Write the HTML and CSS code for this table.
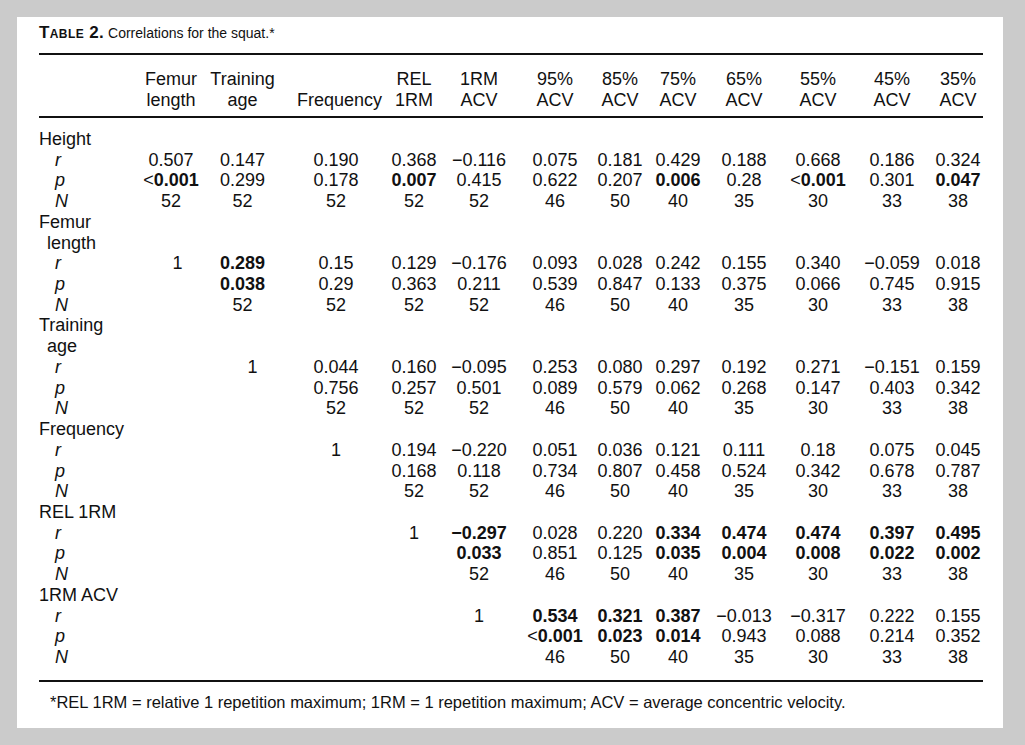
FILE: index.html
```html
<!DOCTYPE html>
<html>
<head>
<meta charset="utf-8">
<link rel="stylesheet" href="styles.css">
</head>
<body>
<div class="panel">
  <div class="title"><b class="tlabel">Table 2.</b> Correlations for the squat.*</div>
  <table class="corr">
    <colgroup>
      <col style="width:96px"><col style="width:72px"><col style="width:82px"><col style="width:86px"><col style="width:72px"><col style="width:70px"><col style="width:70px"><col style="width:62px"><col style="width:62px"><col style="width:70px"><col style="width:74px"><col style="width:78px"><col style="width:50px">
    </colgroup>
    <thead>
      <tr>
        <th class="lab"></th>
        <th>Femur<br>length</th>
        <th>Training<br>age</th>
        <th>Frequency</th>
        <th>REL<br>1RM</th>
        <th>1RM<br>ACV</th>
        <th>95%<br>ACV</th>
        <th>85%<br>ACV</th>
        <th>75%<br>ACV</th>
        <th>65%<br>ACV</th>
        <th>55%<br>ACV</th>
        <th>45%<br>ACV</th>
        <th>35%<br>ACV</th>
      </tr>
    </thead>
    <tbody>
      <tr class="first"><td class="grp" colspan="13">Height</td></tr>
      <tr><td class="st">r</td><td>0.507</td><td>0.147</td><td>0.190</td><td>0.368</td><td>&minus;0.116</td><td>0.075</td><td>0.181</td><td>0.429</td><td>0.188</td><td>0.668</td><td>0.186</td><td>0.324</td></tr>
      <tr><td class="st">p</td><td>&lt;<b>0.001</b></td><td>0.299</td><td>0.178</td><td><b>0.007</b></td><td>0.415</td><td>0.622</td><td>0.207</td><td><b>0.006</b></td><td>0.28</td><td>&lt;<b>0.001</b></td><td>0.301</td><td><b>0.047</b></td></tr>
      <tr><td class="st">N</td><td>52</td><td>52</td><td>52</td><td>52</td><td>52</td><td>46</td><td>50</td><td>40</td><td>35</td><td>30</td><td>33</td><td>38</td></tr>

      <tr><td class="grp" colspan="13">Femur<br>length</td></tr>
      <tr><td class="st">r</td><td class="one-1">1</td><td><b>0.289</b></td><td>0.15</td><td>0.129</td><td>&minus;0.176</td><td>0.093</td><td>0.028</td><td>0.242</td><td>0.155</td><td>0.340</td><td>&minus;0.059</td><td>0.018</td></tr>
      <tr><td class="st">p</td><td></td><td><b>0.038</b></td><td>0.29</td><td>0.363</td><td>0.211</td><td>0.539</td><td>0.847</td><td>0.133</td><td>0.375</td><td>0.066</td><td>0.745</td><td>0.915</td></tr>
      <tr><td class="st">N</td><td></td><td>52</td><td>52</td><td>52</td><td>52</td><td>46</td><td>50</td><td>40</td><td>35</td><td>30</td><td>33</td><td>38</td></tr>

      <tr><td class="grp" colspan="13">Training<br>age</td></tr>
      <tr><td class="st">r</td><td></td><td class="one-2">1</td><td>0.044</td><td>0.160</td><td>&minus;0.095</td><td>0.253</td><td>0.080</td><td>0.297</td><td>0.192</td><td>0.271</td><td>&minus;0.151</td><td>0.159</td></tr>
      <tr><td class="st">p</td><td></td><td></td><td>0.756</td><td>0.257</td><td>0.501</td><td>0.089</td><td>0.579</td><td>0.062</td><td>0.268</td><td>0.147</td><td>0.403</td><td>0.342</td></tr>
      <tr><td class="st">N</td><td></td><td></td><td>52</td><td>52</td><td>52</td><td>46</td><td>50</td><td>40</td><td>35</td><td>30</td><td>33</td><td>38</td></tr>

      <tr><td class="grp" colspan="13">Frequency</td></tr>
      <tr><td class="st">r</td><td></td><td></td><td>1</td><td>0.194</td><td>&minus;0.220</td><td>0.051</td><td>0.036</td><td>0.121</td><td>0.111</td><td>0.18</td><td>0.075</td><td>0.045</td></tr>
      <tr><td class="st">p</td><td></td><td></td><td></td><td>0.168</td><td>0.118</td><td>0.734</td><td>0.807</td><td>0.458</td><td>0.524</td><td>0.342</td><td>0.678</td><td>0.787</td></tr>
      <tr><td class="st">N</td><td></td><td></td><td></td><td>52</td><td>52</td><td>46</td><td>50</td><td>40</td><td>35</td><td>30</td><td>33</td><td>38</td></tr>

      <tr><td class="grp" colspan="13">REL 1RM</td></tr>
      <tr><td class="st">r</td><td></td><td></td><td></td><td>1</td><td><b>&minus;0.297</b></td><td>0.028</td><td>0.220</td><td><b>0.334</b></td><td><b>0.474</b></td><td><b>0.474</b></td><td><b>0.397</b></td><td><b>0.495</b></td></tr>
      <tr><td class="st">p</td><td></td><td></td><td></td><td></td><td><b>0.033</b></td><td>0.851</td><td>0.125</td><td><b>0.035</b></td><td><b>0.004</b></td><td><b>0.008</b></td><td><b>0.022</b></td><td><b>0.002</b></td></tr>
      <tr><td class="st">N</td><td></td><td></td><td></td><td></td><td>52</td><td>46</td><td>50</td><td>40</td><td>35</td><td>30</td><td>33</td><td>38</td></tr>

      <tr><td class="grp" colspan="13">1RM ACV</td></tr>
      <tr><td class="st">r</td><td></td><td></td><td></td><td></td><td>1</td><td><b>0.534</b></td><td><b>0.321</b></td><td><b>0.387</b></td><td>&minus;0.013</td><td>&minus;0.317</td><td>0.222</td><td>0.155</td></tr>
      <tr><td class="st">p</td><td></td><td></td><td></td><td></td><td></td><td>&lt;<b>0.001</b></td><td><b>0.023</b></td><td><b>0.014</b></td><td>0.943</td><td>0.088</td><td>0.214</td><td>0.352</td></tr>
      <tr class="last"><td class="st">N</td><td></td><td></td><td></td><td></td><td></td><td>46</td><td>50</td><td>40</td><td>35</td><td>30</td><td>33</td><td>38</td></tr>
    </tbody>
  </table>
  <p class="note">*REL 1RM = relative 1 repetition maximum; 1RM = 1 repetition maximum; ACV = average concentric velocity.</p>
</div>
</body>
</html>
```

FILE: styles.css
```css
html, body {
  margin: 0;
  padding: 0;
}
body {
  background: #cbcbcb;
  padding: 17px 22px 17px 17px;
  font-family: "Liberation Sans", Arial, sans-serif;
  color: #111111;
}
.panel {
  background: #ffffff;
  width: 986px;
  height: 711px;
  box-sizing: border-box;
  padding: 6px 20px 0 22px;
}
.title {
  font-size: 14px;
  line-height: 20px;
  height: 20px;
  margin-bottom: 10px;
}
.tlabel {
  font-size: 17px;
  line-height: 1;
  font-variant: small-caps;
  letter-spacing: 0.4px;
}
.corr {
  width: 944px;
  table-layout: fixed;
  border-collapse: separate;
  border-spacing: 0;
  font-size: 18px;
  line-height: 20.72px;
}
.corr th {
  font-weight: normal;
  text-align: center;
  vertical-align: bottom;
  padding: 14px 0 5px;
  line-height: 21px;
  border-top: 2px solid #111;
  border-bottom: 2px solid #111;
}
.corr td {
  padding: 0;
  text-align: center;
  white-space: nowrap;
}
.corr th:nth-child(3), .corr td:nth-child(3) { padding-right: 11px; }
.corr th:nth-child(4), .corr td:nth-child(4) { padding-left: 8px; }
.corr th:nth-child(5), .corr td:nth-child(5) { padding-left: 6px; }
.corr th:nth-child(6), .corr td:nth-child(6) { padding-right: 6px; }
.corr th:nth-child(7), .corr td:nth-child(7) { padding-left: 6px; }
.corr th:nth-child(8), .corr td:nth-child(8) { padding-left: 4px; }
.corr th:nth-child(9), .corr td:nth-child(9) { padding-right: 4px; }
.corr th:nth-child(10), .corr td:nth-child(10) { padding-right: 4px; }
.corr th:nth-child(12), .corr td:nth-child(12) { padding-right: 4px; }
.corr td.one-1 { padding-left: 13px; }
.corr td.one-2 { padding-left: 9px; padding-right: 0; }
.corr td.grp {
  text-align: left;
  padding-left: 8px;
  text-indent: -8px;
}
.corr td.st {
  text-align: left;
  font-style: italic;
  padding-left: 16px;
}
.corr tr.first td {
  padding-top: 11px;
}
.corr tr.last td {
  padding-bottom: 12px;
  border-bottom: 2px solid #111;
}
.note {
  margin: 11px 0 0 11px;
  font-size: 16.5px;
  line-height: 18px;
}
```
